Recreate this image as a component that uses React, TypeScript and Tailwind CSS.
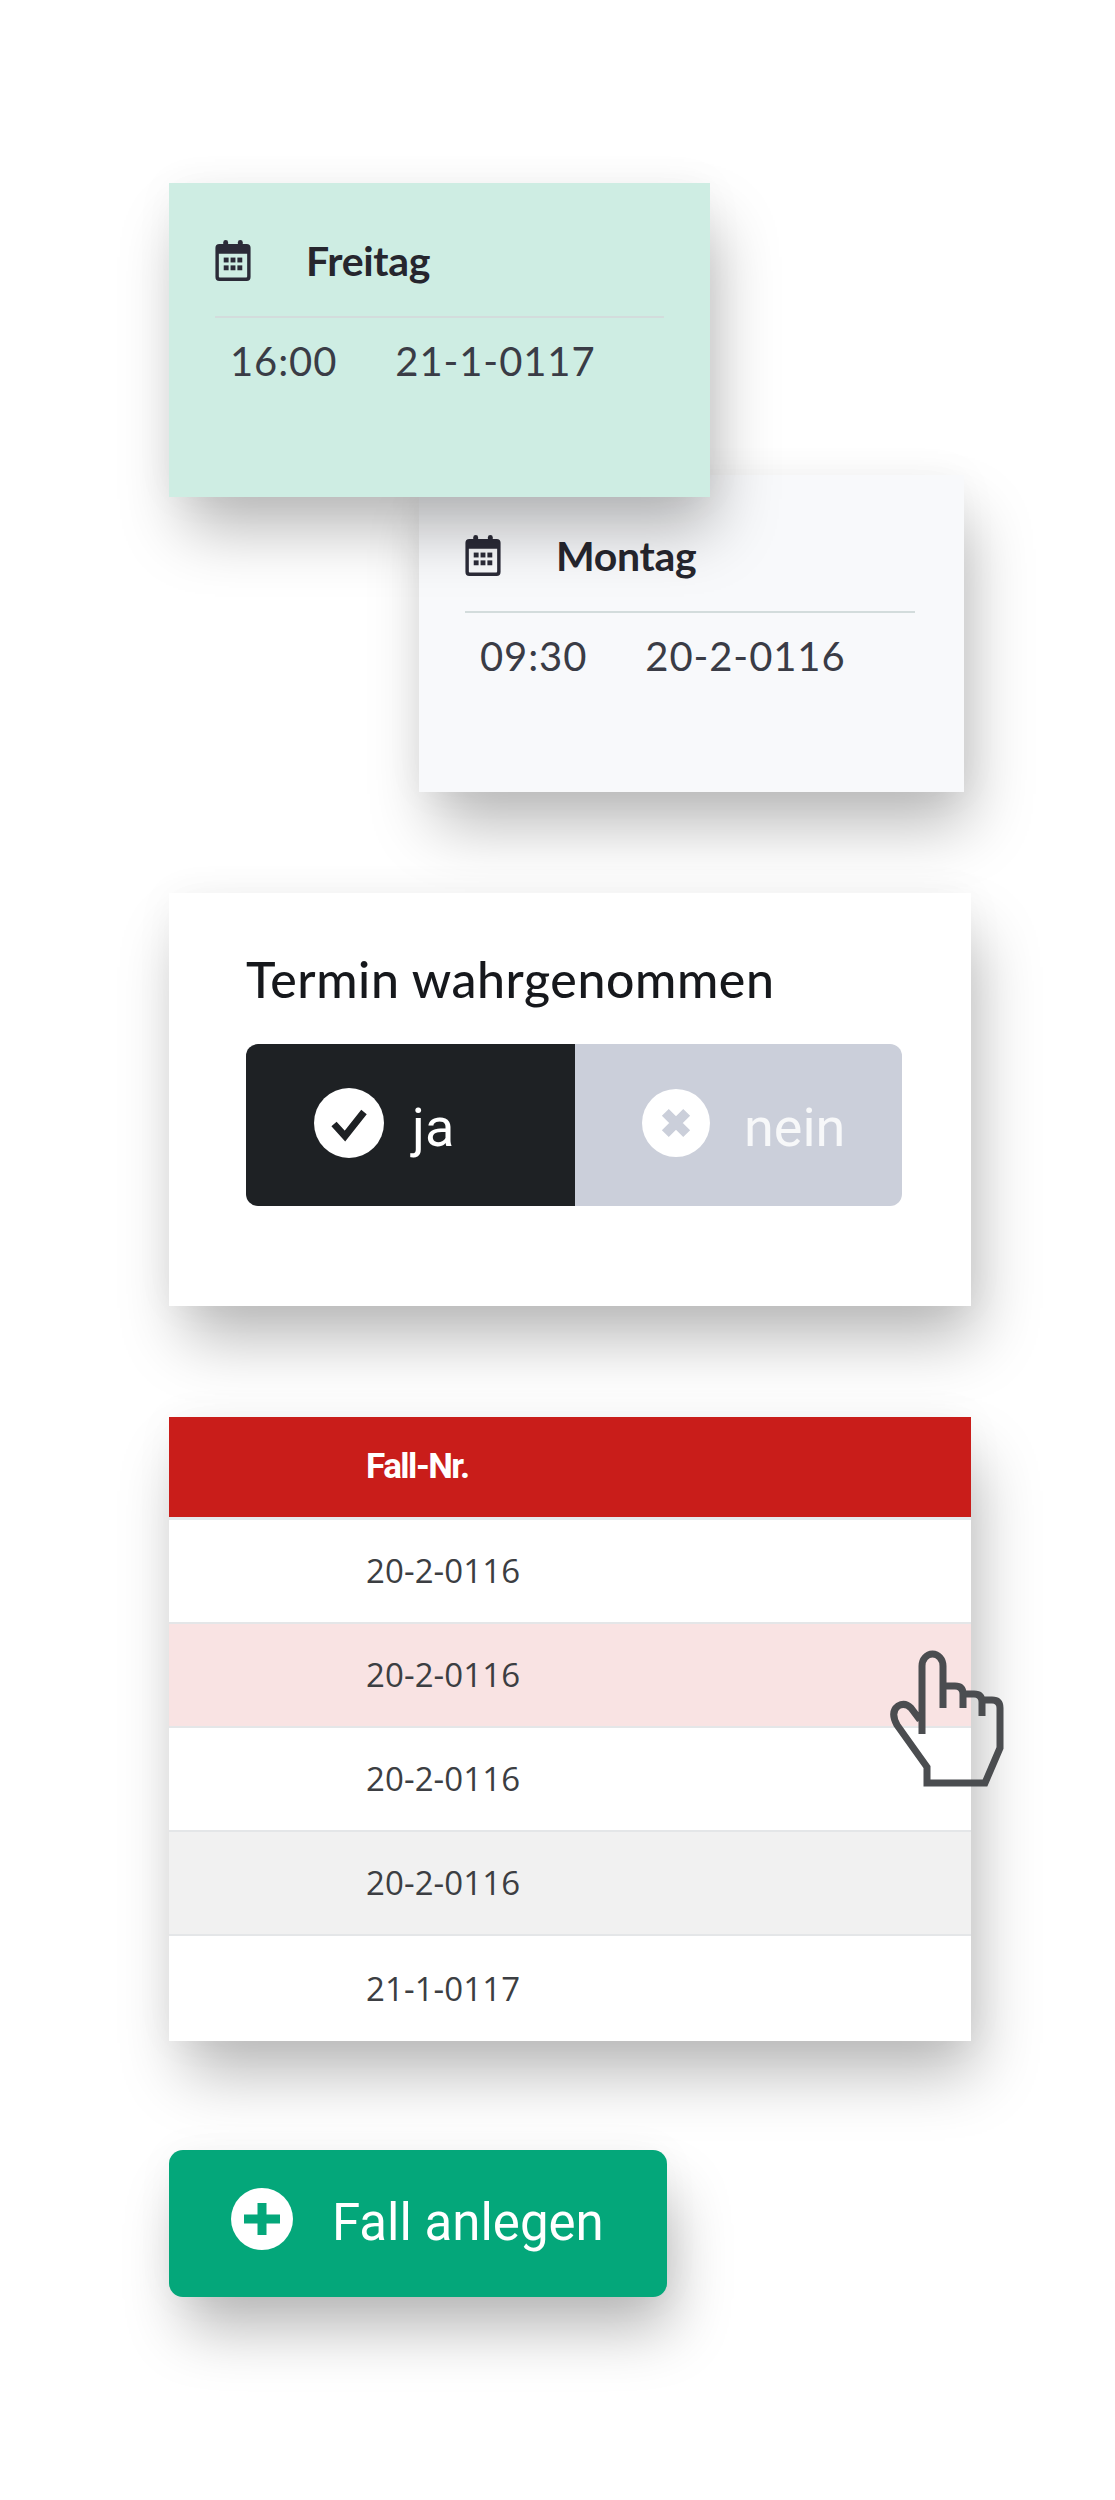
const cardShadow = 'shadow-[10px_38px_60px_-6px_rgba(0,0,0,0.28),0_0_40px_rgba(0,0,0,0.04)]';

function CalendarIcon() {
  return (
    <svg viewBox="0 0 36 42" className="h-[41px] w-[36px] shrink-0" fill="#2b2b38">
      <rect x="8" y="0" width="5" height="8" rx="2.5" />
      <rect x="23" y="0" width="5" height="8" rx="2.5" />
      <path fillRule="evenodd" d="M4 4h28a4 4 0 0 1 4 4v30a4 4 0 0 1-4 4H4a4 4 0 0 1-4-4V8a4 4 0 0 1 4-4Zm-.5 10v23.500a1 1 0 0 0 1 1h27a1 1 0 0 0 1-1V14Z" />
      <rect x="8.500" y="18" width="5" height="5" />
      <rect x="15.500" y="18" width="5" height="5" />
      <rect x="22.500" y="18" width="5" height="5" />
      <rect x="8.500" y="26" width="5" height="5" />
      <rect x="15.500" y="26" width="5" height="5" />
      <rect x="22.500" y="26" width="5" height="5" />
    </svg>
  );
}

function DateCard({ day, time, code, className }: { day: string; time: string; code: string; className: string }) {
  return (
    <div className={`font-['Lato',sans-serif] ${cardShadow} ${className}`}>
      <div className="flex h-[135px] items-center gap-[55px] border-b-2 border-[#d3dcdc] pt-[22px]">
        <CalendarIcon />
        <span className="text-[41px] font-bold tracking-[-0.3px] text-[#26262e]">{day}</span>
      </div>
      <div className="flex gap-[58px] pl-[15px] pt-[17px] text-[40px] leading-[52px] tracking-[0.9px] text-[#3a3c46]">
        <span>{time}</span>
        <span>{code}</span>
      </div>
    </div>
  );
}

function HandCursor() {
  return (
    <svg viewBox="0 0 160 170" className="absolute left-[691px] top-[213px] z-10 h-[170px] w-[160px]" fill="none" stroke="#4b4d50" strokeWidth="7">
      <path d="M62 104V36a10.500 12 0 0 1 21 0v42M83 56h12q8 0 8 8v14M103 64h11q8 0 8 8v14M122 70h10q8 0 8 8v40l-15 35H67v-16L37 95q-7-13 1-19 7-4 13 2l9 12" />
    </svg>
  );
}

const rows = [
  { code: '20-2-0116', bg: 'bg-white' },
  { code: '20-2-0116', bg: 'bg-[#f9e3e3]' },
  { code: '20-2-0116', bg: 'bg-white' },
  { code: '20-2-0116', bg: 'bg-[#f1f1f1]' },
  { code: '21-1-0117', bg: 'bg-white' },
];

export default function App() {
  return (
    <div className="flex h-[2500px] w-[1115px] flex-col items-start bg-white pl-[169px] pt-[183px]">
      <DateCard day="Freitag" time="16:00" code="21-1-0117" className="relative z-10 h-[314px] w-[541px] bg-[#ceede3] px-[46px]" />
      <DateCard day="Montag" time="09:30" code="20-2-0116" className="-mt-[22px] ml-[250px] h-[317px] w-[545px] bg-[#f8f9fb] pl-[46px] pr-[49px] pt-[3px]" />

      <div className={`mt-[101px] h-[413px] w-[802px] bg-white pl-[77px] pt-[56px] ${cardShadow}`}>
        <h2 className="font-['Lato',sans-serif] text-[50px] font-medium leading-[60px] tracking-[0.6px] text-[#16181c]">
          Termin wahrgenommen
        </h2>
        <div className="mt-[35px] flex h-[162px] w-[656px] overflow-hidden rounded-[12px] font-['Roboto',sans-serif] text-[54px] text-white">
          <div className="flex w-[329px] items-center gap-[28px] bg-[#1e2124] pl-[68px]">
            <svg viewBox="0 0 70 70" className="-mt-[5px] h-[70px] w-[70px]">
              <circle cx="35" cy="35" r="35" fill="white" />
              <path d="M20 36l11 12 19-24" fill="none" stroke="#1e2124" strokeWidth="7" />
            </svg>
            <span className="pt-[4px]">ja</span>
          </div>
          <div className="flex flex-1 items-center gap-[34px] bg-[#cbcfda] pl-[67px] text-white/85">
            <svg viewBox="0 0 70 70" className="-mt-[5px] h-[68px] w-[68px]">
              <circle cx="35" cy="35" r="35" fill="white" />
              <path d="M24 24l22 22M46 24L24 46" fill="none" stroke="#cbcfda" strokeWidth="10" />
            </svg>
            <span className="pt-[4px]">nein</span>
          </div>
        </div>
      </div>

      <div className={`relative mt-[111px] w-[802px] ${cardShadow}`}>
        <HandCursor />
        <div className="flex h-[103px] items-center border-b-[3px] border-[#e5e9ee] bg-[#c91d1a] pl-[197px] font-['Roboto',sans-serif] text-[35px] font-bold tracking-[-1.5px] text-white">
          Fall-Nr.
        </div>
        {rows.map((row, i) => (
          <div
            key={i}
            className={`flex h-[104px] items-center border-b-2 border-[#e4e6e8] pl-[197px] font-['Open_Sans',sans-serif] text-[33px] tracking-[0.1px] text-[#3c3e42] last:h-[105px] last:border-b-0 ${row.bg}`}
          >
            {row.code}
          </div>
        ))}
      </div>

      <div className={`mt-[109px] flex h-[147px] w-[498px] items-center gap-[39px] rounded-[14px] bg-[#04a77a] pl-[62px] ${cardShadow}`}>
        <svg viewBox="0 0 62 62" className="-mt-[10px] h-[62px] w-[62px]">
          <circle cx="31" cy="31" r="31" fill="white" />
          <path d="M31 15v32M13 31h36" fill="none" stroke="#04a77a" strokeWidth="9" />
        </svg>
        <span className="font-['Roboto',sans-serif] text-[51px] text-white">Fall anlegen</span>
      </div>
    </div>
  );
}
